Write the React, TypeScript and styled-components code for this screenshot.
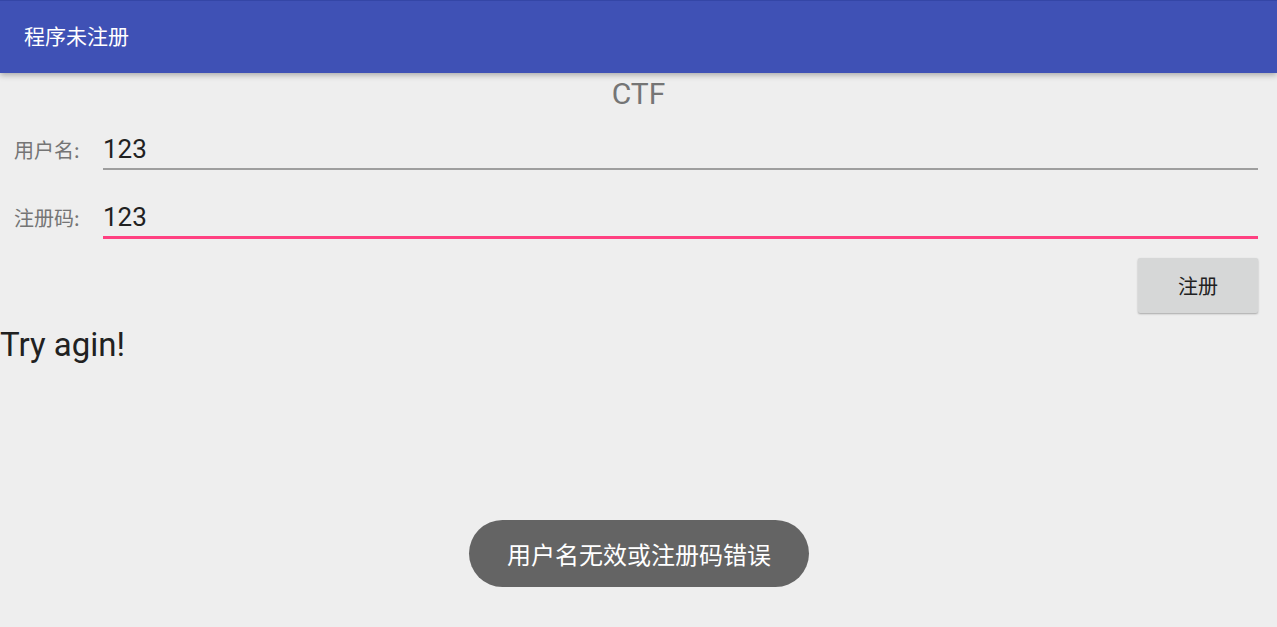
import React from "react";
import styled, { createGlobalStyle } from "styled-components";

const Global = createGlobalStyle`
  html, body { margin: 0; padding: 0; background: #eeeeee; }
  body { font-family: Roboto, "Noto Sans CJK SC", sans-serif; }
  * { box-sizing: border-box; }
`;

const Screen = styled.div`
  width: 1277px;
  height: 627px;
  background: #eeeeee;
  display: flex;
  flex-direction: column;
  overflow: hidden;
  position: relative;
`;

const AppBar = styled.header`
  height: 73px;
  flex: none;
  background: #3f51b5;
  border-top: 1px solid #3446a6;
  display: flex;
  align-items: center;
  padding-left: 24px;
  padding-bottom: 4px;
  box-shadow: 0 2px 6px rgba(0, 0, 0, 0.3);
  position: relative;
  z-index: 1;
`;

const Title = styled.h1`
  margin: 0;
  font-family: "Noto Sans CJK SC", sans-serif;
  font-weight: 400;
  font-size: 21px;
  color: #ffffff;
`;

const Content = styled.main`
  flex: 1;
  display: flex;
  flex-direction: column;
`;

const Heading = styled.div`
  text-align: center;
  font-size: 30px;
  color: #757575;
  line-height: 36px;
  margin-top: 3px;
`;

const Form = styled.div`
  display: flex;
  flex-direction: column;
  padding: 0 19px 0 14px;
`;

const Row = styled.div<{ $first?: boolean }>`
  display: flex;
  align-items: baseline;
  margin-top: ${(p) => (p.$first ? "21px" : "31px")};
`;

const Label = styled.label`
  width: 89px;
  flex: none;
  font-family: "Noto Sans CJK SC", sans-serif;
  font-size: 20px;
  color: #757575;
  line-height: 24px;
`;

const Field = styled.div<{ $active?: boolean }>`
  flex: 1;
  font-size: 26px;
  color: #212121;
  line-height: 32px;
  padding-bottom: 3px;
  border-bottom: ${(p) => (p.$active ? "3px solid #ff4081" : "2px solid #9e9e9e")};
`;

const ButtonRow = styled.div`
  display: flex;
  justify-content: flex-end;
  padding-right: 19px;
  margin-top: 19px;
`;

const Button = styled.button`
  width: 120px;
  height: 55px;
  border: none;
  border-radius: 2px;
  background: #d6d7d7;
  box-shadow: 0 1px 2px rgba(0, 0, 0, 0.3);
  font-family: "Noto Sans CJK SC", sans-serif;
  font-size: 20px;
  color: #212121;
  padding: 0;
`;

const Result = styled.div`
  font-size: 33px;
  color: #212121;
  line-height: 40px;
  margin-top: 12px;
`;

const Toast = styled.div`
  position: absolute;
  left: 469px;
  top: 520px;
  width: 340px;
  height: 67px;
  border-radius: 34px;
  background: #646464;
  color: #ffffff;
  font-family: "Noto Sans CJK SC", sans-serif;
  font-size: 24px;
  display: flex;
  align-items: center;
  justify-content: center;
`;

export default function App() {
  return (
    <Screen>
      <Global />
      <AppBar>
        <Title>程序未注册</Title>
      </AppBar>
      <Content>
        <Heading>CTF</Heading>
        <Form>
          <Row $first>
            <Label>用户名:</Label>
            <Field>123</Field>
          </Row>
          <Row>
            <Label>注册码:</Label>
            <Field $active>123</Field>
          </Row>
        </Form>
        <ButtonRow>
          <Button>注册</Button>
        </ButtonRow>
        <Result>Try agin!</Result>
      </Content>
      <Toast>用户名无效或注册码错误</Toast>
    </Screen>
  );
}
